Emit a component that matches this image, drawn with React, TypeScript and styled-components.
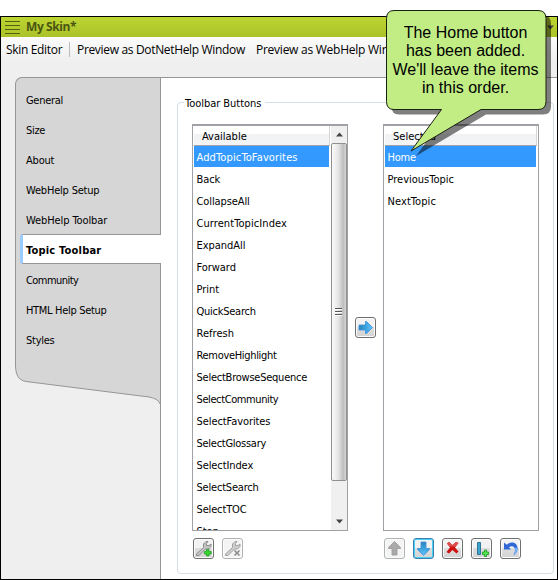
import React from 'react';
import styled, { createGlobalStyle } from 'styled-components';

const Global = createGlobalStyle`
  * { box-sizing: border-box; }
  html, body { margin: 0; background: #fff; overflow: hidden; }
  ul { list-style: none; margin: 0; padding: 0; }
  button { padding: 0; font: inherit; }
`;

const Page = styled.div`
  position: relative;
  width: 558px;
  height: 580px;
  padding-top: 16px;
  font: 11px/14px "DejaVu Sans Condensed", "DejaVu Sans", sans-serif;
  color: #000;
`;
const Window = styled.main`
  display: flex;
  flex-direction: column;
  height: 564px;
  border: 1px solid #000;
  background: #efefef;
`;
const TitleBar = styled.header`
  display: flex;
  align-items: center;
  flex: none;
  height: 20px;
  padding: 0 3px 0 4px;
  background: linear-gradient(#bdd531, #abc22a);
  color: #4b5512;
`;
const Title = styled.h1`
  flex: 1;
  margin: 0 0 0 6px;
  font: bold 12px/20px "Open Sans", sans-serif;
  letter-spacing: -0.4px;
`;
const Menu = styled.nav`
  display: flex;
  align-items: flex-start;
  flex: none;
  height: 40px;
  padding: 3px 0 0 5px;
  background: linear-gradient(#fbfbfb 0, #f4f4f4 14px, #efefef 26px);
  font: 12px/19px "Open Sans", sans-serif;
  white-space: nowrap;
  overflow: hidden;
`;
const MenuItem = styled.span<{ $width: number; $track: number }>`
  flex: none;
  width: ${(p) => p.$width}px;
  letter-spacing: ${(p) => p.$track}px;
`;
const MenuRule = styled.i`
  flex: none;
  width: 1px;
  height: 15px;
  margin: 2px 7px 0 0;
  background: #bcbcbc;
`;
const Body = styled.div`
  display: flex;
  flex: 1;
  min-height: 0;
`;
const Rail = styled.aside`
  width: 159px;
  padding-left: 14px;
`;
const Tabs = styled.ul`
  height: 289px;
  padding-top: 6px;
  border: solid #969696;
  border-width: 1px 0 0 1px;
  border-top-left-radius: 7px;
  background: #d6d6d6;
`;
const Tab = styled.li<{ $active?: boolean; $track: number }>`
  position: relative;
  height: 30px;
  margin: 0 ${(p) => (p.$active ? -1 : 0)}px 0 4px;
  padding-left: ${(p) => (p.$active ? 3 : 6)}px;
  border: solid ${(p) => (p.$active ? '#969696' : 'transparent')};
  border-width: ${(p) => (p.$active ? '1px 0' : '0')};
  border-left: ${(p) => (p.$active ? '3px solid #99ccff' : '0')};
  border-radius: 3px 0 0 3px;
  background: ${(p) => (p.$active ? '#fff' : 'transparent')};
  font-weight: ${(p) => (p.$active ? 'bold' : 'normal')};
  line-height: ${(p) => (p.$active ? 31 : 33)}px;
  letter-spacing: ${(p) => p.$track}px;
  white-space: nowrap;
`;
const RailTail = styled.svg`display: block;`;
const Content = styled.section`
  flex: 1;
  padding: 24px 3px 5px 16px;
  border: solid #969696;
  border-width: 1px 0 0 1px;
  background: #fff;
`;
const Group = styled.section`
  height: 472px;
  padding: 0 14px;
  border: 1px solid #d5dfe5;
  border-radius: 4px;
`;
const Legend = styled.h2`
  width: 81px;
  height: 16px;
  margin: -8px 0 0 -8px;
  padding-left: 1px;
  background: #fff;
  font: inherit;
  line-height: 18px;
  letter-spacing: -0.03px;
  white-space: nowrap;
`;
const Picker = styled.div`
  display: grid;
  grid-template-columns: 156px 35px 156px;
  grid-template-rows: 407px 21px;
  row-gap: 7px;
  padding-top: 13px;
`;
const ListBox = styled.div`
  display: flex;
  border: 1px solid #a0a1a7;
  border-top-width: 2px;
  overflow: hidden;
  background: #fff;
`;
const ListMain = styled.div`
  flex: 1;
  padding: 0 1px;
`;
const ListHead = styled.div`
  height: 20px;
  padding-left: 8px;
  border-right: 1px solid #d5d5d5;
  border-bottom: 1px solid #a0a1a7;
  background: linear-gradient(#fff 40%, #f1f2f4 42%, #f4f5f6);
  line-height: 21px;
`;
const Item = styled.li<{ $active?: boolean; $track: number }>`
  height: 22px;
  margin-right: 1px;
  padding-left: 2.5px;
  background: ${(p) => (p.$active ? 'linear-gradient(#3399ff 21px, transparent 21px)' : 'none')};
  color: ${(p) => (p.$active ? '#fff' : '#000')};
  line-height: 24px;
  letter-spacing: ${(p) => p.$track}px;
  white-space: nowrap;
`;
const ScrollBar = styled.div`
  display: flex;
  flex-direction: column;
  width: 16px;
  background: #f0f0f0;
`;
const ScrollArrow = styled.div`
  display: grid;
  place-items: center;
  height: 17px;
`;
const Thumb = styled.div`
  display: grid;
  place-items: center;
  height: 338px;
  margin-bottom: 32px;
  border: 1px solid #8f8f8f;
  border-radius: 2px;
  background: linear-gradient(90deg, #fafafa, #e6e6e6 45%, #bdbdbf 80%, #d8d8d8);
`;
const Transfer = styled.div`
  display: flex;
  padding: 193px 0 0 7px;
`;
const Actions = styled.div`
  display: flex;
  gap: 8px;
  padding-left: 1px;
`;
const IconButton = styled.button<{ $tone?: 'off' | 'focus' }>`
  display: grid;
  place-items: center;
  width: 21px;
  height: 21px;
  border: 1px solid ${(p) => (p.$tone === 'off' ? '#adb2b5' : p.$tone === 'focus' ? '#3c7fb1' : '#707070')};
  border-radius: 3px;
  background: ${(p) => (p.$tone === 'off' ? '#f4f4f4' : 'linear-gradient(#f2f2f2 45%, #dddddd 50%, #d3d3d3)')};
  box-shadow: inset 0 0 0 1px ${(p) => (p.$tone === 'focus' ? '#48d1f5' : '#fcfcfc')};
`;
const Glyph = styled.svg`display: block;`;
const Callout = styled.div`
  position: absolute;
  left: 385px;
  top: 9px;
  width: 170px;
  height: 150px;
`;
const CalloutShape = styled.svg`
  position: absolute;
  inset: 0;
`;
const CalloutText = styled.p`
  position: relative;
  width: 161px;
  margin: 15px 0 0;
  font: 16px/18.4px "Liberation Sans", Arial, sans-serif;
  text-align: center;
  white-space: nowrap;
`;

const Wrench = ({ kind }: { kind: 'add' | 'remove' }) => (
  <Glyph width="17" height="17" viewBox="0 0 17 17" opacity={kind === 'add' ? 1 : 0.8}>
    <path d="M1.500 14 8.500 7.500V4L11 1.500H13L11.500 3.500V5.500H14L16 4V6.500L13.500 9H10.500L4 15.500H1.500Z" fill="#c4c4c4" stroke="#858585" strokeWidth=".9" />
    {kind === 'add' ? (
      <path d="M11.500 9.500h2.500v2h2.200v2.500H14v2h-2.500v-2H9.300v-2.500h2.200Z" fill="#39d52f" stroke="#189d20" strokeWidth=".7" />
    ) : (
      <path d="m10.500 10.500 5 5m0-5-5 5" stroke="#777" strokeWidth="1.7" />
    )}
  </Glyph>
);

const BlockArrow = ({ turn, muted }: { turn: number; muted?: boolean }) => (
  <Glyph width="17" height="17" viewBox="0 0 17 17">
    <defs>
      <linearGradient id="arrowBlue" x1="0" y1="0" x2="1" y2="0">
        <stop offset="0" stopColor="#2b86ba" />
        <stop offset=".5" stopColor="#3da4dc" />
        <stop offset="1" stopColor="#63c3ff" />
      </linearGradient>
    </defs>
    <path
      transform={`rotate(${turn} 8.5 8.5)`}
      d="M2 6H8.500V2.500H9.500L15.500 8.500 9.500 14.500H8.500V11H2Z"
      fill={muted ? '#aaa' : 'url(#arrowBlue)'}
      stroke={muted ? '#999' : '#3b8ee0'}
      strokeWidth=".8"
    />
  </Glyph>
);

const DeleteIcon = () => (
  <Glyph width="17" height="17" viewBox="0 0 17 17">
    <path d="M3 3.500 5 2 8.500 5 12 2 14.500 3 11 7.500 14.500 11.500 12.500 13.500 8.500 10 5 13.500 2.500 12 6 7.500Z" fill="#cf1010" />
    <path d="M3 3.500 5 2 8.500 5 12 2 14.500 3 11.500 6.500H5.500Z" fill="#dd5050" />
  </Glyph>
);

const SeparatorIcon = () => (
  <Glyph width="17" height="17" viewBox="0 0 17 17">
    <path d="M4.500 2.500h3v12h-3Z" fill="#3fa3cf" stroke="#2c7699" />
    <path d="M11.500 10h2v2h2v2.500h-2v2h-2v-2h-2V12h2Z" fill="#53e64a" stroke="#179827" strokeWidth=".8" />
  </Glyph>
);

const UndoIcon = () => (
  <Glyph width="17" height="17" viewBox="0 0 17 17">
    <path d="M2 2.500V9.500H9L7 7.300C9 5.500 12 5.800 12.800 8.500 13.300 11 12.500 13.500 11.500 15.500 14 13.500 16 11 15.500 7.500 15 2.500 9 .5 4.800 4.800Z" fill="#3268d5" />
    <path d="M12.800 8C13.700 11 12.500 13.500 11.500 15.500 14 13.500 15.800 11 15.400 7.500Z" fill="#6db0ff" />
  </Glyph>
);

const Chevron = ({ down }: { down?: boolean }) => (
  <Glyph width="7" height="5" viewBox="0 0 7 5">
    <path d={down ? 'M0 .5H7L3.500 4.500Z' : 'M3.500 .5 7 4.500H0Z'} fill="#454545" />
  </Glyph>
);

type Entry = [label: string, track: number];

const tabs: Entry[] = [
  ['General', -0.3], ['Size', -0.3], ['About', -0.2], ['WebHelp Setup', -0.2], ['WebHelp Toolbar', -0.1],
  ['Topic Toolbar', 0.2], ['Community', -0.55], ['HTML Help Setup', -0.32], ['Styles', -0.25],
];
const available: Entry[] = [
  ['AddTopicToFavorites', 0.13], ['Back', -0.1], ['CollapseAll', -0.1], ['CurrentTopicIndex', 0.08],
  ['ExpandAll', -0.05], ['Forward', -0.05], ['Print', 0], ['QuickSearch', -0.25], ['Refresh', 0.05],
  ['RemoveHighlight', -0.32], ['SelectBrowseSequence', -0.24], ['SelectCommunity', -0.4],
  ['SelectFavorites', -0.08], ['SelectGlossary', -0.27], ['SelectIndex', -0.1],
  ['SelectSearch', -0.2], ['SelectTOC', -0.15], ['Stop', -0.1],
];
const selected: Entry[] = [['Home', -0.25], ['PreviousTopic', 0], ['NextTopic', 0.08]];
const bubble = 'M9 1.5H153Q161 1.5 161 9.5V92.5Q161 100.5 153 100.5H96L26 142 56.5 100.5H9Q1.5 100.5 1.5 92.5V9.5Q1.5 1.5 9 1.5Z';

export default function App() {
  return (
    <Page>
      <Global />
      <Window>
        <TitleBar>
          <Glyph width="15" height="13" viewBox="0 0 15 13">
            <path d="M0 .5H15M0 4.500H15M0 8.500H15M0 12.500H15" stroke="#54600f" />
          </Glyph>
          <Title>My Skin*</Title>
          <Chevron down />
        </TitleBar>
        <Menu>
          <MenuItem $width={63} $track={-0.33}>Skin Editor</MenuItem>
          <MenuRule />
          <MenuItem $width={179} $track={-0.33}>Preview as DotNetHelp Window</MenuItem>
          <MenuItem $width={170} $track={-0.25}>Preview as WebHelp Window</MenuItem>
        </Menu>
        <Body>
          <Rail>
            <Tabs>
              {tabs.map(([label, track]) => (
                <Tab key={label} $active={label === 'Topic Toolbar'} $track={track}>{label}</Tab>
              ))}
            </Tabs>
            <RailTail width="145" height="38" viewBox="0 0 145 38">
              <path d="M.5 0C1 9 3 14 11 15.500L134 31Q144 33 145 38V0Z" fill="#d6d6d6" />
              <path d="M.5 0C1 9 3 14 11 15.500L134 31Q144 33 145 38" fill="none" stroke="#969696" />
            </RailTail>
          </Rail>
          <Content>
            <Group>
              <Legend>Toolbar Buttons</Legend>
              <Picker>
                <ListBox>
                  <ListMain>
                    <ListHead>Available</ListHead>
                    <ul>
                      {available.map(([label, track], i) => (
                        <Item key={label} $active={i === 0} $track={track}>{label}</Item>
                      ))}
                    </ul>
                  </ListMain>
                  <ScrollBar>
                    <ScrollArrow><Chevron /></ScrollArrow>
                    <Thumb>
                      <Glyph width="8" height="8" viewBox="0 0 8 8">
                        <path d="M0 .5H7M0 3.500H7M0 6.500H7" stroke="#555" />
                        <path d="M0 1.500H7M0 4.500H7M0 7.500H7" stroke="#fff" />
                      </Glyph>
                    </Thumb>
                    <ScrollArrow><Chevron down /></ScrollArrow>
                  </ScrollBar>
                </ListBox>
                <Transfer>
                  <IconButton aria-label="Add"><BlockArrow turn={0} /></IconButton>
                </Transfer>
                <ListBox>
                  <ListMain>
                    <ListHead>Selected</ListHead>
                    <ul>
                      {selected.map(([label, track], i) => (
                        <Item key={label} $active={i === 0} $track={track}>{label}</Item>
                      ))}
                    </ul>
                  </ListMain>
                </ListBox>
                <Actions>
                  <IconButton aria-label="New"><Wrench kind="add" /></IconButton>
                  <IconButton aria-label="Discard" $tone="off"><Wrench kind="remove" /></IconButton>
                </Actions>
                <span />
                <Actions>
                  <IconButton aria-label="Up" $tone="off"><BlockArrow turn={-90} muted /></IconButton>
                  <IconButton aria-label="Down" $tone="focus"><BlockArrow turn={90} /></IconButton>
                  <IconButton aria-label="Delete"><DeleteIcon /></IconButton>
                  <IconButton aria-label="Separator"><SeparatorIcon /></IconButton>
                  <IconButton aria-label="Undo"><UndoIcon /></IconButton>
                </Actions>
              </Picker>
            </Group>
          </Content>
        </Body>
      </Window>
      <Callout>
        <CalloutShape width="170" height="150" viewBox="0 0 170 150">
          <path d={bubble} transform="translate(5 5)" fill="#000" opacity=".5" />
          <path d={bubble} fill="#c1ed84" stroke="#1b210f" />
        </CalloutShape>
        <CalloutText>
          The Home button<br />has been added.<br />We'll leave the items<br />in this order.
        </CalloutText>
      </Callout>
    </Page>
  );
}
